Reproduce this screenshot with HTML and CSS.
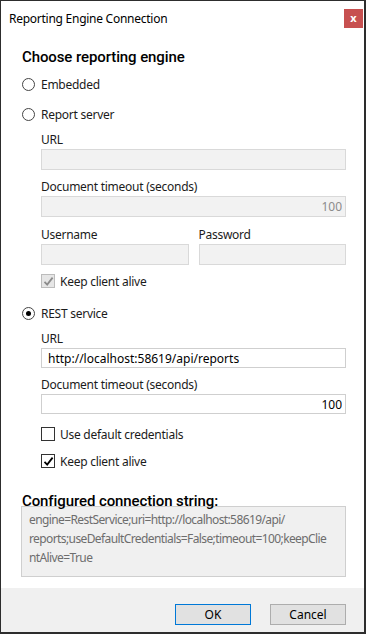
FILE: index.html
```html
<!DOCTYPE html>
<html lang="en">
<head>
<meta charset="UTF-8">
<title>Reporting Engine Connection</title>
<link rel="stylesheet" href="styles.css">
</head>
<body>
<div class="window">
  <div class="titlebar">
    <span class="title">Reporting Engine Connection</span>
    <span class="close">x</span>
  </div>

  <div class="content">
    <h2 class="heading">Choose reporting engine</h2>

    <div class="option opt-embedded">
      <span class="radio"></span>
      <span>Embedded</span>
    </div>

    <div class="option opt-server">
      <span class="radio"></span>
      <span>Report server</span>
    </div>
    <div class="group">
      <div class="label lbl-first">URL</div>
      <input class="field" type="text" disabled>
      <div class="label">Document timeout (seconds)</div>
      <input class="field num" type="text" value="100" disabled>
      <div class="pair">
        <div class="col">
          <div class="label">Username</div>
          <input class="field" type="text" disabled>
        </div>
        <div class="col">
          <div class="label">Password</div>
          <input class="field" type="password" disabled>
        </div>
      </div>
      <div class="check check-first disabled">
        <span class="box"><svg width="11" height="11" viewBox="0 0 11 11"><path d="M1.5 5.8 L4.2 8.6 L9.6 1.6" fill="none" stroke="currentColor" stroke-width="1.8"/></svg></span>
        <span>Keep client alive</span>
      </div>
    </div>

    <div class="option opt-rest">
      <span class="radio on"></span>
      <span>REST service</span>
    </div>
    <div class="group">
      <div class="label lbl-first">URL</div>
      <input class="field on" type="text" value="http://localhost:58619/api/reports">
      <div class="label">Document timeout (seconds)</div>
      <input class="field on num" type="text" value="100">
      <div class="check check-first">
        <span class="box"></span>
        <span>Use default credentials</span>
      </div>
      <div class="check">
        <span class="box"><svg width="11" height="11" viewBox="0 0 11 11"><path d="M1.5 5.8 L4.2 8.6 L9.6 1.6" fill="none" stroke="currentColor" stroke-width="1.8"/></svg></span>
        <span>Keep client alive</span>
      </div>
    </div>

    <h3 class="subheading">Configured connection string:</h3>
    <div class="connstr">engine=RestService;uri=http://localhost:58619/api/<br>reports;useDefaultCredentials=False;timeout=100;keepClie<br>ntAlive=True</div>
  </div>

  <div class="footer">
    <button class="btn default">OK</button>
    <button class="btn">Cancel</button>
  </div>
</div>
</body>
</html>
```

FILE: styles.css
```css
*, *:before, *:after{
  box-sizing: border-box;
}
body{
  margin: 0;
  background: #fff;
  font-family: "Segoe UI", "Noto Sans", "Open Sans", sans-serif;
  font-size: 12px;
  letter-spacing: -0.26px;
  color: #1b1b1b;
}
.window{
  width: 366px;
  height: 634px;
  border: 1px solid #2d2d2d;
  border-right-width: 2px;
  border-bottom-width: 2px;
  background: #fff;
  display: flex;
  flex-direction: column;
}

/* title bar */
.titlebar{
  height: 34px;
  display: flex;
  align-items: center;
  padding-left: 8px;
}
.title{
  flex: 1;
  color: #000;
}
.close{
  width: 19px;
  height: 19px;
  margin-right: 1px;
  background: #c75050;
  color: #fff;
  font-weight: bold;
  font-size: 11px;
  line-height: 17px;
  letter-spacing: 0;
  text-align: center;
}

/* main area */
.content{
  flex: 1;
  padding: 12px 18px 0 21px;
}
.heading,
.subheading{
  margin: 0;
  font-family: Roboto, "Noto Sans", sans-serif;
  font-size: 15px;
  line-height: 20px;
  font-weight: 500;
  letter-spacing: -0.1px;
  color: #000;
}
.option{
  display: flex;
  align-items: center;
  height: 20px;
  gap: 6px;
}
.opt-embedded{ margin-top: 7px; }
.opt-server{ margin-top: 10px; }
.opt-rest{ margin-top: 12px; }

.radio{
  width: 13px;
  height: 13px;
  border: 1px solid #444;
  border-radius: 50%;
  background: #fff;
  display: flex;
  align-items: center;
  justify-content: center;
}
.radio.on:after{
  content: '';
  width: 5px;
  height: 5px;
  border-radius: 50%;
  background: #000;
}

.group{
  padding-left: 19px;
}
.label{
  line-height: 16px;
  margin-top: 9px;
  margin-bottom: 1px;
}
.lbl-first{ margin-top: 8px; }

.field{
  display: block;
  width: 100%;
  height: 21px;
  margin: 0;
  padding: 0 3px 0 6px;
  border: 1px solid #d9d9d9;
  background: #f2f2f2;
  font: inherit;
  color: #8c8c8c;
  outline: none;
}
.field.on{
  height: 20px;
  background: #fff;
  border-color: #cfcfcf;
  color: #000;
}
.field.num{ text-align: right; }

.pair{
  display: flex;
  gap: 10px;
}
.pair .label{ margin-top: 10px; }
.col{ flex: 1; }

.check{
  display: flex;
  align-items: center;
  gap: 5px;
  height: 20px;
  margin-top: 7px;
}
.check-first{ margin-top: 10px; }
.group .check-first.disabled{ margin-top: 6px; }
.box{
  width: 14px;
  height: 14px;
  border: 1px solid #333;
  background: #fff;
  color: #000;
  display: flex;
  align-items: center;
  justify-content: center;
}
.disabled .box{
  border-color: #bcbcbc;
  background: #e6e6e6;
  color: #8c8c8c;
}

.subheading{
  margin-top: 20px;
}
.connstr{
  margin: -5px 0 0 -1px;
  height: 71px;
  padding: 3px 7px;
  border: 1px solid #cfcfcf;
  background: #f0f0f0;
  color: #6d6d6d;
  line-height: 19px;
  letter-spacing: -0.6px;
  white-space: nowrap;
}

/* buttons */
.footer{
  height: 44px;
  background: #f0f0f0;
  display: flex;
  justify-content: flex-end;
  align-items: flex-start;
  gap: 19px;
  padding: 16px 18px 0 0;
}
.btn{
  width: 76px;
  height: 21px;
  padding: 0;
  border: 1px solid #adadad;
  background: #e1e1e1;
  font: inherit;
  color: #000;
}
.btn.default{
  border-color: #0078d7;
}
```
